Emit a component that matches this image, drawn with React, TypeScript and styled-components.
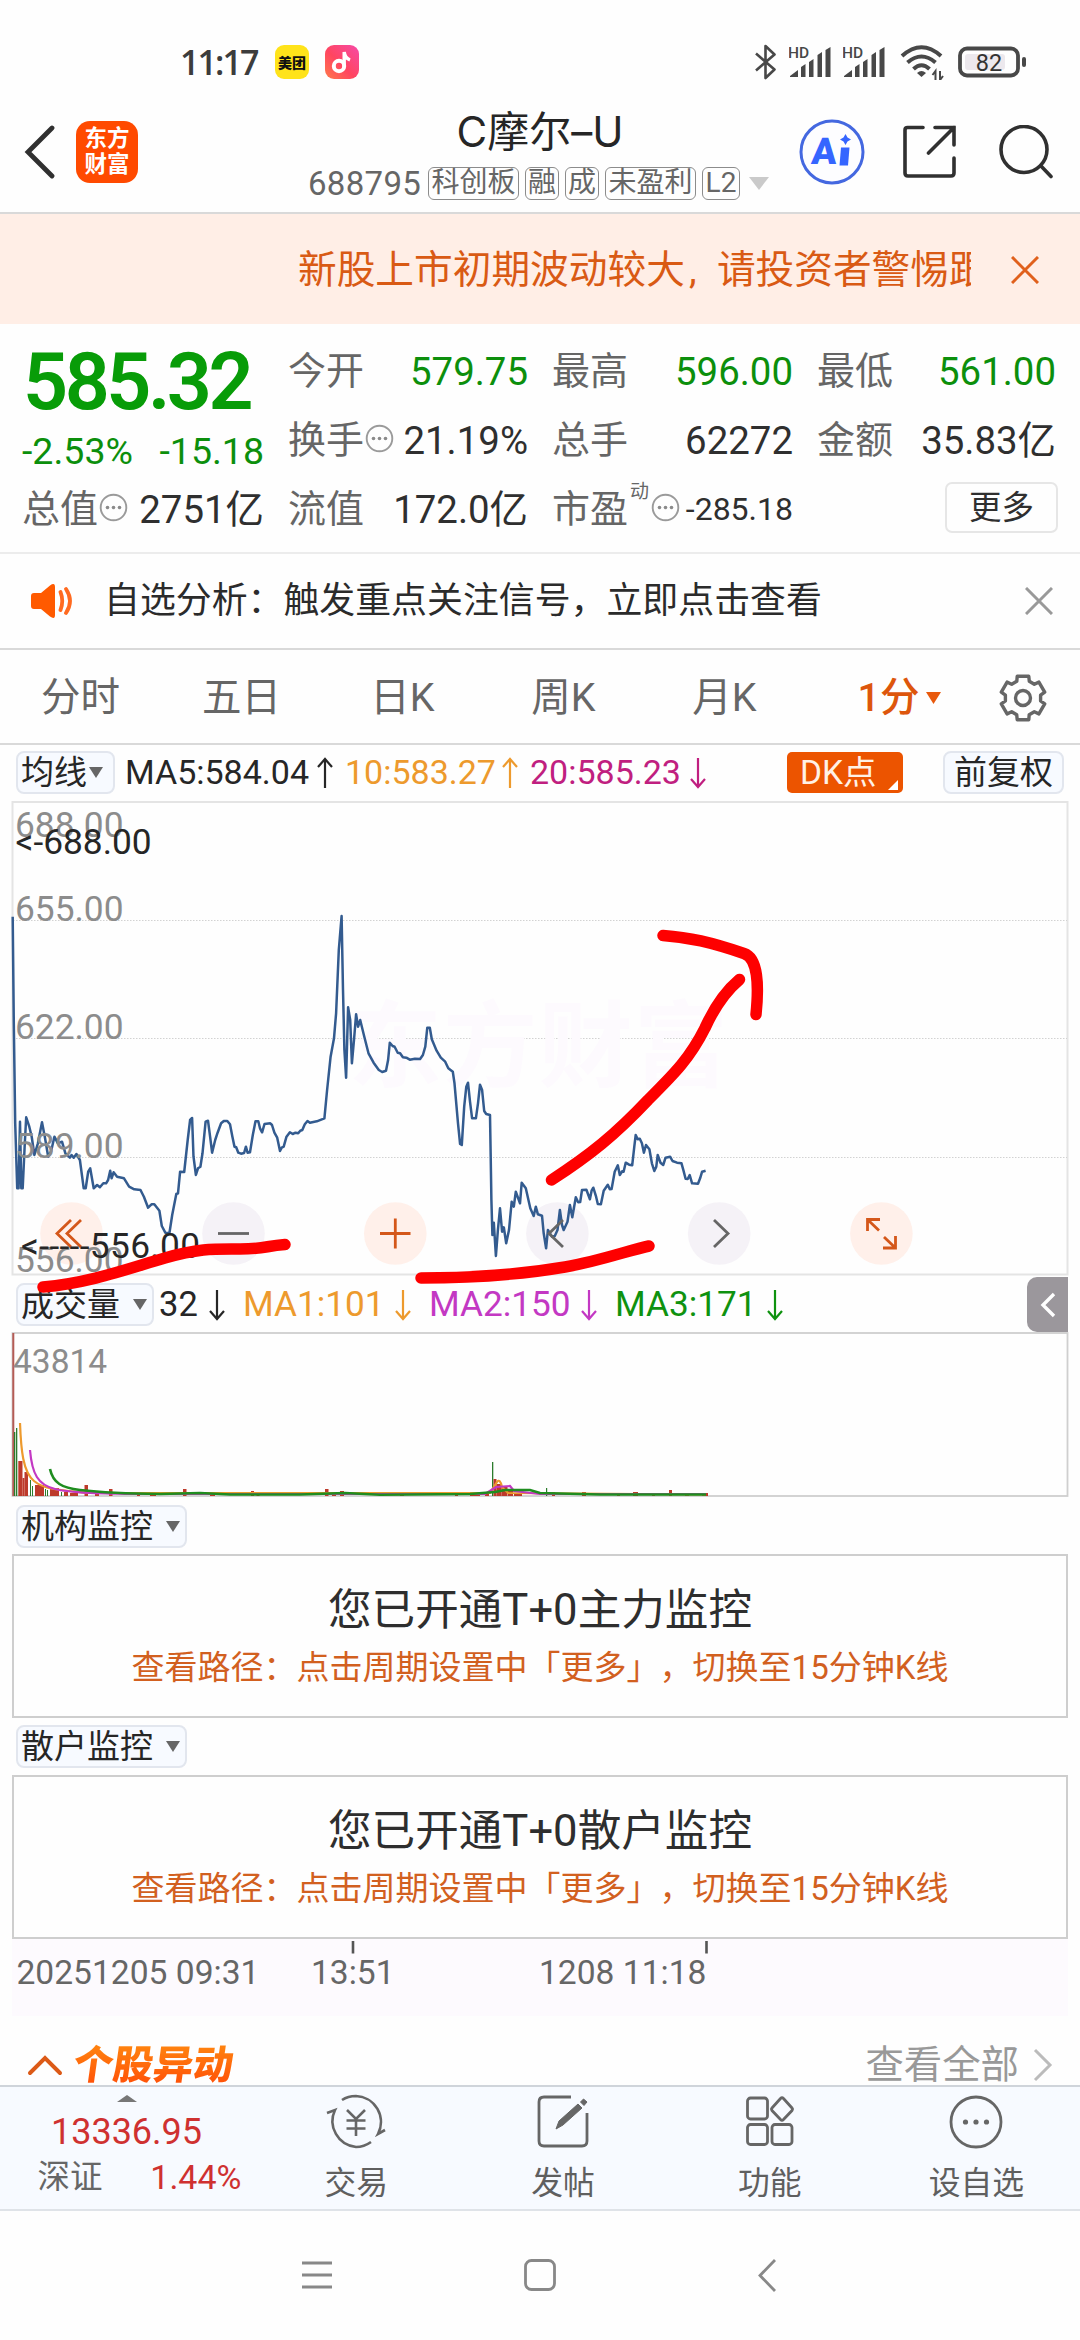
import React from "react";
import styled, { createGlobalStyle } from "styled-components";

const GlobalStyle = createGlobalStyle`
  * { box-sizing: border-box; }
  html, body { margin: 0; padding: 0; background: #fefefe; }
  body {
    font-family: Roboto, "Noto Sans CJK SC", sans-serif;
    color: #2b2b2b;
    text-spacing-trim: space-all;
    -webkit-font-smoothing: antialiased;
  }
  svg { display: block; flex: none; }
`;

const Screen = styled.main`
  width: 1080px;
  height: 2340px;
  overflow: hidden;
  display: flex;
  flex-direction: column;
  background: #fefefe;
  white-space: nowrap;
`;

/* ---------- status bar ---------- */
const StatusBar = styled.div`
  height: 84px;
  flex: none;
  padding: 40px 53px 0 180px;
  display: flex;
  justify-content: space-between;
`;
const StatusGroup = styled.div`
  height: 44px;
  display: flex;
  align-items: center;
`;
const Clock = styled.span`
  width: 95px;
  font: 600 34px/44px "Open Sans", Roboto, sans-serif;
  letter-spacing: -1.9px;
  color: #3c3c3c;
`;
const AppBadge = styled.span<{ $bg: string }>`
  width: 34px;
  height: 34px;
  margin-right: 16px;
  border-radius: 9px;
  background: ${(p) => p.$bg};
  color: #111;
  font-size: 14px;
  font-weight: 900;
  display: flex;
  align-items: center;
  justify-content: center;
`;

/* ---------- header ---------- */
const Header = styled.header`
  height: 130px;
  flex: none;
  display: grid;
  grid-template-columns: 300px 480px 300px;
  border-bottom: 2px solid #d9d9d9;
`;
const HeaderLeft = styled.div`
  display: flex;
  align-items: center;
  padding: 7px 0 0 22px;
  gap: 20px;
`;
const Logo = styled.div`
  width: 62px;
  height: 62px;
  border-radius: 14px;
  background: #ff4a00;
  color: #fff;
  font-size: 22.5px;
  font-weight: 700;
  line-height: 26px;
  text-align: center;
  padding-top: 4px;
`;
const HeaderTitle = styled.div`
  padding-top: 24px;
`;
const Title = styled.h1`
  margin: 0;
  font: 400 42px/48px Inter, "Noto Sans CJK SC", sans-serif;
  text-align: center;
  color: #262626;
`;
const CodeRow = styled.div`
  display: flex;
  align-items: center;
  height: 33px;
  margin-top: 11px;
  padding-left: 8px;
  font-size: 33px;
  color: #666;
`;
const Code = styled.span`
  width: 120px;
  letter-spacing: 0.3px;
`;
const Tag = styled.span<{ $w: number }>`
  width: ${(p) => p.$w}px;
  height: 33px;
  margin-right: 6px;
  border: 1.5px solid #8c8c8c;
  border-radius: 6px;
  font-size: 28px;
  line-height: 30px;
  display: flex;
  justify-content: center;
`;
const HeaderRight = styled.div`
  display: flex;
  align-items: center;
  padding: 7px 0 0 19px;
  gap: 37px;
`;

/* ---------- risk notice ---------- */
const Notice = styled.div`
  height: 110px;
  flex: none;
  background: #ffeee6;
  display: flex;
  align-items: center;
  padding: 1px 0 0 298px;
`;
const Marquee = styled.div`
  width: 673px;
  padding-top: 1px;
  overflow: hidden;
  font-size: 38.7px;
  line-height: 56px;
  color: #d95a14;
`;
const Comma = styled.span`
  display: inline-block;
  width: 32px;
  padding-left: 4px;
`;
const CloseIcon = styled.svg`
  margin-left: 40px;
`;

/* ---------- quote ---------- */
const Quote = styled.section`
  height: 230px;
  flex: none;
  display: grid;
  grid-template-columns: 242px 240px 241px 239px;
  column-gap: 24px;
  padding: 12px 0 0 22px;
  border-bottom: 2px solid #ececec;
`;
const Column = styled.div`
  display: flex;
  flex-direction: column;
`;
const Price = styled.div`
  height: 92px;
  padding-left: 1px;
  font-size: 79px;
  font-weight: 600;
  line-height: 93px;
  letter-spacing: -3.5px;
  color: #089c08;
`;
const Change = styled.div`
  height: 46px;
  display: flex;
  justify-content: space-between;
  font-size: 37.5px;
  line-height: 46px;
  color: #0c8f0c;
`;
const Metric = styled.div<{ $first?: boolean }>`
  height: 69px;
  line-height: 69px;
  display: flex;
  align-items: center;
  font-size: 38px;
  margin-top: ${(p) => (p.$first ? "1px" : "0")};
`;
const MetricLabel = styled.span`
  color: #666;
  font-size: 38px;
`;
const MetricValue = styled.span<{ $green?: boolean; $size?: number }>`
  margin-left: auto;
  color: ${(p) => (p.$green ? "#0c8f0c" : "#2f2f2f")};
  font-size: ${(p) => p.$size ?? 38.4}px;
`;
const Super = styled.span`
  color: #666;
  font-size: 19px;
  line-height: 24px;
  margin: 0 1px 36px 2px;
`;
const MoreButton = styled.button`
  width: 113px;
  height: 51px;
  margin: 7px -2px 0 auto;
  padding: 0;
  border: 2px solid #e6e6e6;
  border-radius: 7px;
  background: transparent;
  font: 400 32.5px/44px Roboto, "Noto Sans CJK SC", sans-serif;
  color: #2f2f2f;
`;

/* ---------- alert ---------- */
const Alert = styled.div`
  height: 96px;
  flex: none;
  display: flex;
  align-items: center;
  padding: 0 27px 0 30px;
  border-bottom: 2px solid #d9d9d9;
`;
const AlertText = styled.span`
  margin-left: 30px;
  flex: 1;
  font-size: 35.9px;
  line-height: 48px;
  color: #2b2b2b;
`;

/* ---------- tabs ---------- */
const Tabs = styled.nav`
  height: 95px;
  flex: none;
  display: grid;
  grid-template-columns: repeat(5, 161px) 189px 1fr;
  align-items: center;
  padding-top: 2px;
  border-bottom: 2px solid #d9d9d9;
`;
const Tab = styled.span<{ $active?: boolean }>`
  font-size: 39.5px;
  line-height: 60px;
  color: ${(p) => (p.$active ? "#dd560c" : "#666")};
  font-weight: ${(p) => (p.$active ? 500 : 400)};
  display: flex;
  align-items: center;
  justify-content: center;
  gap: 7px;
`;

/* ---------- indicator rows ---------- */
const IndicatorRow = styled.div<{ $h: number; $pt: number }>`
  height: ${(p) => p.$h}px;
  flex: none;
  display: flex;
  align-items: flex-start;
  padding: ${(p) => p.$pt}px 12px 0 16px;
`;
const Chip = styled.span<{ $w: number; $gap?: number }>`
  width: ${(p) => p.$w}px;
  height: 43px;
  flex: none;
  display: flex;
  align-items: center;
  gap: ${(p) => p.$gap ?? 13}px;
  padding-left: 3px;
  border: 2px solid #e2e6ee;
  border-radius: 8px;
  background: #f7faff;
  font-size: 33px;
  line-height: 40px;
  color: #262626;
`;
const Reading = styled.span<{ $c: string; $w: number; $size: number }>`
  width: ${(p) => p.$w}px;
  height: 43px;
  flex: none;
  font-size: ${(p) => p.$size}px;
  line-height: 45px;
  color: ${(p) => p.$c};
  display: flex;
  align-items: center;
  justify-content: space-between;
`;
const Lead = styled.span<{ $w: number }>`
  width: ${(p) => p.$w}px;
  flex: none;
`;
const DkButton = styled.span`
  width: 116px;
  height: 41px;
  margin-top: 1px;
  padding: 0 5px 3px 13px;
  display: flex;
  align-items: flex-end;
  justify-content: space-between;
  border-radius: 5px;
  background: #ec5400;
  color: #fff1e6;
  font-size: 33.5px;
  line-height: 34px;
`;
const Drawer = styled.span`
  width: 41px;
  height: 55px;
  margin-left: auto;
  display: flex;
  align-items: center;
  justify-content: center;
  border-radius: 10px 0 0 10px;
  background: #9b979c;
`;

/* ---------- charts ---------- */
const ChartSvg = styled.svg`
  margin-left: 12px;
  overflow: visible;
  position: relative;
  z-index: 1;
`;
const Panel = styled.section`
  width: 1056px;
  height: 164px;
  flex: none;
  margin-left: 12px;
  padding-top: 25px;
  border: 2px solid #cecece;
  text-align: center;
`;
const PanelTitle = styled.div`
  font-size: 43.6px;
  line-height: 60px;
  color: #2e2e2e;
`;
const PanelHint = styled.div`
  font-size: 33px;
  line-height: 53px;
  color: #d2601f;
`;
const Axis = styled.svg`
  margin-left: 12px;
  background: #fdfafe;
`;

/* ---------- movement row ---------- */
const Movement = styled.div`
  height: 69px;
  flex: none;
  display: flex;
  align-items: center;
  padding: 28px 27px 0 27px;
  overflow: hidden;
`;
const MovementTitle = styled.span`
  margin: -5px 0 0 11px;
  flex: none;
  width: 164px;
  font: 900 40px/44px "Noto Sans CJK SC", sans-serif;
  transform: skewX(-8deg);
  color: transparent;
  background: linear-gradient(#ff8a10, #ff5208);
  -webkit-background-clip: text;
  background-clip: text;
`;
const SeeAll = styled.span`
  margin-left: auto;
  margin-right: 14px;
  font-size: 38.4px;
  line-height: 44px;
  color: #999;
`;

/* ---------- bottom bar ---------- */
const BottomBar = styled.footer`
  height: 126px;
  flex: none;
  display: grid;
  grid-template-columns: 253px repeat(4, 206.7px);
  border-top: 2px solid #cfd4da;
  border-bottom: 2px solid #dfe3e8;
  background: #f7faff;
`;
const IndexCell = styled.div`
  display: flex;
  flex-direction: column;
  align-items: center;
  padding-top: 8px;
  color: #cf3130;
`;
const IndexValue = styled.div`
  margin-top: 10px;
  font-size: 36px;
  line-height: 40px;
`;
const IndexChange = styled.div`
  width: 204px;
  margin: 5px 0 0 26px;
  display: flex;
  justify-content: space-between;
  font-size: 34px;
  line-height: 40px;
`;
const IndexName = styled.span`
  font-size: 32.5px;
  color: #666;
`;
const Action = styled.div`
  display: flex;
  flex-direction: column;
  align-items: center;
  padding-top: 5px;
  font-size: 31.8px;
  line-height: 40px;
  color: #5f5f5f;
  gap: 13px;
`;
const SystemNav = styled.div`
  flex: 1;
  display: flex;
  padding: 45px 0 0 299px;
`;

/* ---------- small drawings ---------- */
const Caret = ({ w = 14, h = 11, c = "#666" }: { w?: number; h?: number; c?: string }) => (
  <svg width={w} height={h}>
    <path d={`M0 0H${w}L${w / 2} ${h}Z`} fill={c} />
  </svg>
);

const Arrow = ({ up, c }: { up?: boolean; c: string }) => (
  <svg width="18" height="32" viewBox="0 0 18 32" fill="none" stroke={c} strokeWidth="2.2">
    {up ? <path d="M9 31V2M2 10L9 2L16 10" /> : <path d="M9 1V30M2 22L9 30L16 22" />}
  </svg>
);

const Cross = ({ c, s = 28, sw = 3 }: { c: string; s?: number; sw?: number }) => (
  <CloseIcon width={s} height={s} viewBox="0 0 28 28" stroke={c} strokeWidth={sw}>
    <path d="M1 1L27 27M27 1L1 27" />
  </CloseIcon>
);

const DotsSvg = styled.svg`
  margin: -5px 0 0 1px;
`;
const InfoDots = () => (
  <DotsSvg width="29" height="29" viewBox="0 0 29 29">
    <circle cx="14.5" cy="14.5" r="12.8" fill="none" stroke="#9a9a9a" strokeWidth="1.9" />
    {[8.5, 14.5, 20.5].map((x) => (
      <circle key={x} cx={x} cy="14.5" r="1.8" fill="#8a8a8a" />
    ))}
  </DotsSvg>
);

const Signal = () => (
  <svg width="42" height="34" viewBox="0 0 42 34" fill="#484848">
    <text x="-1" y="13" fontSize="15.5" fontWeight="500" fontFamily="Roboto">HD</text>
    <path d="M1 32V31L9 25V32ZM12 32V22L16.5 19V32ZM20 32V17L24.5 14V32ZM28.5 32V10L33 7V32ZM36.5 32V5L41.500 2V32Z" />
  </svg>
);

const StatusIcons = () => (
  <StatusGroup>
    <svg width="21" height="36" viewBox="0 0 21 36" fill="none" stroke="#484848" strokeWidth="2.6">
      <path d="M1 9.500L19.500 25.500L10.500 34V2L19.500 10.500L1 26.500" strokeLinejoin="round" />
    </svg>
    <Lead $w={13} />
    <Signal />
    <Lead $w={12} />
    <Signal />
    <Lead $w={15} />
    <svg width="44" height="36" viewBox="0 0 44 36" fill="none" stroke="#484848" strokeWidth="4">
      <path d="M2 12Q21.500 -5.500 41 12M7.500 18.500Q21.500 6.500 35.500 18.500M13.500 25Q21.500 17.500 29.500 25" />
      <path d="M17 29Q21.500 25 26 29L21.500 33Z" fill="#484848" stroke="none" />
      <path d="M35.500 36V27L32.500 31M40 27V36L43 32" strokeWidth="2" />
    </svg>
    <Lead $w={14} />
    <svg width="69" height="32" viewBox="0 0 69 32">
      <rect x="2" y="2.500" width="58" height="27" rx="7" fill="#fefefe" stroke="#484848" strokeWidth="3.800" />
      <rect x="7" y="8" width="40" height="16" rx="3" fill="#ece8ed" />
      <rect x="64" y="11" width="4" height="10" rx="2" fill="#484848" />
      <text x="31" y="24.500" textAnchor="middle" fontSize="23.500" fontWeight="400" fontFamily="Roboto" fill="#333">82</text>
    </svg>
  </StatusGroup>
);

/* ---------- price chart ---------- */
// Averaged price trace, sampled on a fine grid: [column, row].
const trace: number[] = [
  37,380, 40,700, 44,1000, 50,1195, 54,1195, 58,995, 62,1195, 66,1195, 72,1060, 76,982, 85,1010, 92,1040, 100,1095,
  110,1060, 122,997, 130,1040, 140,1100, 148,1085, 158,1040, 168,1060, 180,1055, 190,1090, 203,1103, 208,1095,
  214,1103, 222,1092, 232,1110, 243,1195, 249,1195, 256,1145, 262,1135, 272,1195, 282,1185, 290,1192, 300,1180,
  308,1180, 314,1170, 320,1142, 324,1165, 330,1147, 340,1160, 360,1165, 375,1190, 390,1198, 408,1200, 418,1220,
  430,1253, 440,1243, 448,1243, 463,1262, 470,1308, 480,1328, 492,1330, 500,1275, 512,1212, 517,1210, 523,1145,
  535,1146, 545,1050, 552,990, 558,984, 562,1100, 569,1155, 575,1135, 582,1130, 588,1090, 597,995, 604,992,
  610,1040, 616,1088, 625,1050, 632,1028, 642,1000, 650,993, 660,993, 668,1003, 675,1040, 681,1070, 686,1072,
  692,1088, 700,1091, 709,1089, 714,1070, 719,1088, 726,1087, 734,1035, 742,994, 750,994, 755,1015, 761,1027,
  768,1002, 785,1000, 790,1005, 797,1028, 805,1043, 813,1083, 818,1073, 824,1070, 832,1040, 842,1027, 850,1032,
  858,1028, 866,1030, 872,1022, 878,1020, 885,1003, 893,993, 900,998, 920,994, 942,985, 950,900, 960,800,
  970,745, 976,670, 984,480, 992,378, 996,600, 1000,780, 1005,863, 1008,760, 1011,652, 1017,690, 1022,820,
  1028,750, 1034,673, 1040,710, 1046,690, 1058,740, 1070,790, 1085,818, 1100,840, 1110,846, 1121,842, 1127,810,
  1132,758, 1140,768, 1146,770, 1155,788, 1162,790, 1170,802, 1180,803, 1190,809, 1205,806, 1220,807, 1228,795,
  1235,770, 1241,713, 1248,713, 1254,748, 1268,782, 1280,803, 1293,815, 1302,835, 1315,845, 1320,880, 1330,1000,
  1336,1062, 1341,1065, 1348,950, 1354,890, 1359,878, 1365,935, 1371,985, 1382,985, 1388,940, 1394,884, 1400,900,
  1406,963, 1412,972, 1423,975, 1425,1100, 1427,1230, 1430,1335, 1434,1298, 1440,1398, 1446,1320, 1452,1255,
  1458,1325, 1463,1312, 1470,1360, 1478,1320, 1486,1235, 1492,1250, 1498,1205, 1510,1240, 1515,1178, 1527,1195,
  1540,1255, 1550,1278, 1556,1250, 1562,1273, 1574,1277, 1579,1330, 1586,1375, 1591,1320, 1597,1330, 1603,1340,
  1611,1338, 1619,1320, 1626,1260, 1632,1305, 1637,1320, 1648,1295, 1655,1245, 1662,1282, 1672,1222, 1679,1237,
  1685,1236, 1690,1200, 1703,1199, 1713,1228, 1718,1202, 1723,1193, 1731,1220, 1736,1242, 1745,1243, 1753,1202,
  1765,1184, 1771,1198, 1776,1197, 1785,1145, 1794,1126, 1800,1155, 1807,1144, 1811,1145, 1817,1118, 1827,1124,
  1836,1126, 1842,1070, 1846,1035, 1852,1048, 1858,1046, 1864,1060, 1870,1088, 1876,1065, 1886,1078, 1893,1120,
  1900,1143, 1906,1130, 1910,1095, 1918,1118, 1926,1125, 1933,1103, 1946,1100, 1953,1113, 1966,1118, 1979,1120,
  1985,1142, 1991,1166, 1997,1167, 2003,1155, 2010,1180, 2027,1181, 2033,1165, 2039,1145, 2049,1142,
];
const tracePoints = trace
  .map((v, i) => (i % 2 === 0 ? (v / 2.904).toFixed(1) : (790 + v / 3).toFixed(1)))
  .reduce((acc, v, i) => acc + (i % 2 ? "," : " ") + v, "");

const levels: [string, number][] = [
  ["688.00", 837], ["655.00", 921], ["622.00", 1038.5], ["589.00", 1157.5], ["556.00", 1272],
];
const knobs: [number, string][] = [
  [71.5, "#fff0ea"], [233.5, "#f5f2f7"], [395.3, "#fff0ea"], [557.4, "#f5f2f7"], [719.2, "#f5f2f7"], [881.4, "#fff0ea"],
];

const PriceChart = () => (
  <ChartSvg width="1056" height="474" viewBox="12 801 1056 474" fontFamily="Roboto">
    <rect x="12.500" y="802" width="1055" height="472.500" fill="none" stroke="#e4e4e4" strokeWidth="2" />
    {[920.5, 1038.5, 1157.5].map((y) => (
      <path key={y} d={`M13 ${y}H1067`} stroke="#d2d2d2" strokeWidth="1" strokeDasharray="1.500 1.500" />
    ))}
    <text x="348" y="1080" fontSize="94" fontWeight="700" fontFamily="Noto Sans CJK SC" fill="#fdfafe" textLength="380">东方财富</text>
    {knobs.map(([x, c]) => (
      <circle key={x} cx={x} cy="1233.500" r="31.300" fill={c} />
    ))}
    <polyline points={tracePoints} fill="none" stroke="#335b8f" strokeWidth="2.500" strokeLinejoin="round" />
    <g fontSize="35.300" fill="#8c8c8c">
      {levels.map(([t, y]) => (
        <text key={t} x="15" y={y}>{t}</text>
      ))}
    </g>
    <g fill="none" stroke="#d4571a" strokeWidth="2.800">
      <path d="M71 1220L57 1233.500L71 1247M81 1220L67 1233.500L81 1247" />
      <path d="M380 1233.500H410.500M395.300 1218.500V1248.500" />
      <path d="M879 1230.500L867.500 1219.500M867.500 1231V1219.500H880M884 1237L895.500 1248M895.500 1236V1248H883" />
    </g>
    <g fill="none" stroke="#666" strokeWidth="2.800">
      <path d="M218 1233.500H249" />
      <path d="M563 1220L549 1233.500L563 1247" />
      <path d="M714 1220L728 1233.500L714 1247" />
    </g>
    <g fontSize="35.300" fill="#262626">
      <text x="15.500" y="854">&lt;-688.00</text>
      <text x="21" y="1257.500" textLength="179">&lt;-----556.00</text>
    </g>
    <g fill="none" stroke="#fe0000" strokeWidth="11.500" strokeLinecap="round" strokeLinejoin="round">
      <path d="M43 1287C90 1283 130 1268 165 1258S215 1249 240 1249S265 1246 285 1244.500" />
      <path d="M421 1278C480 1278 530 1273 565 1267S630 1250 649 1246" />
      <path d="M551.500 1180C590 1155 615 1135 648 1100C675 1073 690 1058 705 1028C715 1006 727 990 739.500 979.500" />
      <path d="M663 935.500C690 937.500 710 942 744 953.500C758 958 759 985 756 1014.500" />
    </g>
  </ChartSvg>
);

/* ---------- volume chart ---------- */
// [x, width, height, colour]
const red = "#bd3a2b";
const green = "#2c7c2c";
const bars: [number, number, number, string][] = [
  [14, 1.3, 64, green], [16, 1.3, 68, green], [18.3, 4.2, 35, red], [22.5, 2, 18, red], [24.5, 3.5, 24, red],
  [30, 1, 16, green], [32, 1, 10, green], [35, 9, 11, red], [45, 1, 7, green], [47, 1, 6, green], [50, 9, 8, red],
  [61, 1, 4, green], [64, 4, 4, red], [70, 8, 3, red], [84.500, 3.500, 11, red], [95, 4, 3, red], [109, 3.500, 7, red],
  [137, 3, 4, red], [150, 6, 3, red], [183, 3.500, 7, red], [210, 5, 3, red], [251, 3, 5, red], [256.500, 3, 4, red],
  [325, 3.500, 7, red], [332, 4, 4, red], [340, 4, 5, red], [400, 4, 2, red], [455, 3, 3, red], [470, 10, 4, red],
  [485, 4, 4, red], [492, 1.300, 34, green], [493.500, 3, 17, red], [496.500, 5, 12, red], [501.500, 6, 9, red],
  [508, 5, 6, red], [514, 8, 3, red], [546, 1.200, 8, green], [552, 3, 4, red], [582, 4, 4, red], [617, 3, 3, red],
  [633, 5, 4, red], [652, 3, 3, red], [669, 3, 6, red], [685, 4, 3, red], [702, 6, 3, red],
];
const VolumeChart = () => (
  <ChartSvg width="1056" height="165" viewBox="12 1332 1056 165" fontFamily="Roboto">
    <rect x="12.500" y="1333" width="1055" height="163" fill="none" stroke="#cfcfcf" strokeWidth="1.800" />
    <path d="M13.300 1333V1496" stroke="#b45b55" strokeWidth="2" />
    {bars.map(([x, w, h, c]) => (
      <rect key={x} x={x} y={1496 - h} width={w} height={h} fill={c} />
    ))}
    <g fill="none" strokeWidth="2.200">
      <path d="M20 1423C21 1450 23 1472 34 1481S60 1490 90 1493H490L497 1482Q500 1478 502 1487L508 1493L706 1494.500" stroke="#ed9a2d" />
      <path d="M30 1450C32 1474 38 1485 55 1489S90 1493 130 1494H485L496 1487L510 1486L514 1491L540 1494H706" stroke="#c338c3" />
      <path d="M50 1469C53 1483 62 1488 80 1490S120 1493.500 160 1494L200 1493L230 1494.500H300L345 1493L380 1494.800L470 1494L495 1492L505 1490L530 1490L540 1493L600 1494.500H706" stroke="#1f8d1f" strokeWidth="2.600" />
    </g>
    <text x="13" y="1373" fontSize="33.500" fill="#8c8c8c">43814</text>
  </ChartSvg>
);

const PanelBlock = ({ name }: { name: string }) => (
  <Panel>
    <PanelTitle>您已开通T+0{name}监控</PanelTitle>
    <PanelHint>查看路径：点击周期设置中「更多」，切换至15分钟K线</PanelHint>
  </Panel>
);

const gearPath = (() => {
  const pts: string[] = [];
  for (let i = 0; i < 6; i++) {
    const a = (i * Math.PI) / 3 - Math.PI / 2;
    [[-0.26, 22.5], [0.26, 22.5], [0.36, 17.8], [0.69, 17.8]].forEach(([d, r]) => {
      pts.push(`${(25 + r * Math.cos(a + d)).toFixed(1)} ${(25 + r * Math.sin(a + d)).toFixed(1)}`);
    });
  }
  return "M" + pts.join("L") + "Z";
})();
const Gear = styled.svg`
  margin-left: 4px;
`;
const PlainChip = styled(Chip)`
  padding-left: 9px;
`;
const RaisedDrawer = styled(Drawer)`
  margin-top: -6px;
`;
const TotalMetric = styled(Metric)`
  margin-top: 1px;
`;

export default function App() {
  return (
    <>
      <GlobalStyle />
      <Screen>
        <StatusBar>
          <StatusGroup>
            <Clock>11:17</Clock>
            <AppBadge $bg="#ffe31a">美团</AppBadge>
            <AppBadge $bg="linear-gradient(45deg,#ff7a4a,#ff4560 45%,#f64aa8)">
              <svg width="22" height="24" viewBox="0 0 22 24" fill="none" stroke="#fff" strokeWidth="4">
                <circle cx="8" cy="16" r="5.200" />
                <path d="M13.200 17V2Q14 8 19 10" strokeWidth="3.400" />
              </svg>
            </AppBadge>
          </StatusGroup>
          <StatusIcons />
        </StatusBar>

        <Header>
          <HeaderLeft>
            <svg width="34" height="54" viewBox="0 0 34 54" fill="none" stroke="#303030" strokeWidth="4.800">
              <path d="M30 3L6 27L30 51" strokeLinecap="round" />
            </svg>
            <Logo>东方<br />财富</Logo>
          </HeaderLeft>
          <HeaderTitle>
            <Title>C摩尔–U</Title>
            <CodeRow>
              <Code>688795</Code>
              <Tag $w={91}>科创板</Tag>
              <Tag $w={34}>融</Tag>
              <Tag $w={34}>成</Tag>
              <Tag $w={91}>未盈利</Tag>
              <Tag $w={38}>L2</Tag>
              <Lead $w={3} />
              <Caret w={20} h={13} c="#cacaca" />
            </CodeRow>
          </HeaderTitle>
          <HeaderRight>
            <svg width="66" height="66" viewBox="0 0 66 66">
              <circle cx="33" cy="33" r="31" fill="#fdfdff" stroke="#4468e0" strokeWidth="3" />
              <text x="12" y="45.500" fontSize="37" fontWeight="900" fontFamily="Roboto" fill="#3565ff" transform="skewX(-4) translate(3 0)">A</text>
              <path d="M42 28.500H50.500L49 46.500H40.500Z" fill="#3565ff" />
              <path d="M46.500 15L48.500 18.500L52 20.500L48.500 22.500L46.500 26L44.500 22.500L41 20.500L44.500 18.500Z" fill="#3565ff" />
            </svg>
            <svg width="58" height="54" viewBox="0 0 58 54" fill="none" stroke="#303030" strokeWidth="3.600" strokeLinecap="round">
              <path d="M21 2.500H5.500Q3 2.500 3 5V48Q3 51 6 51H49Q52 51 52 48V33" />
              <path d="M33 2.500H52V20M52 2.500L26.500 28" />
            </svg>
            <svg width="56" height="54" viewBox="0 0 56 54" fill="none" stroke="#303030" strokeWidth="3.600" strokeLinecap="round">
              <circle cx="27" cy="24.500" r="23" />
              <path d="M44 41L54 51.500" />
            </svg>
          </HeaderRight>
        </Header>

        <Notice>
          <Marquee>新股上市初期波动较大<Comma>,</Comma>请投资者警惕跟</Marquee>
          <Cross c="#e0601c" />
        </Notice>

        <Quote>
          <Column>
            <Price>585.32</Price>
            <Change><span>-2.53%</span><span>-15.18</span></Change>
            <TotalMetric>
              <MetricLabel>总值</MetricLabel><InfoDots />
              <MetricValue>2751亿</MetricValue>
            </TotalMetric>
          </Column>
          <Column>
            <Metric $first><MetricLabel>今开</MetricLabel><MetricValue $green>579.75</MetricValue></Metric>
            <Metric><MetricLabel>换手</MetricLabel><InfoDots /><MetricValue>21.19%</MetricValue></Metric>
            <Metric><MetricLabel>流值</MetricLabel><MetricValue>172.0亿</MetricValue></Metric>
          </Column>
          <Column>
            <Metric $first><MetricLabel>最高</MetricLabel><MetricValue $green>596.00</MetricValue></Metric>
            <Metric><MetricLabel>总手</MetricLabel><MetricValue>62272</MetricValue></Metric>
            <Metric>
              <MetricLabel>市盈</MetricLabel><Super>动</Super><InfoDots />
              <MetricValue $size={32}>-285.18</MetricValue>
            </Metric>
          </Column>
          <Column>
            <Metric $first><MetricLabel>最低</MetricLabel><MetricValue $green>561.00</MetricValue></Metric>
            <Metric><MetricLabel>金额</MetricLabel><MetricValue>35.83亿</MetricValue></Metric>
            <MoreButton>更多</MoreButton>
          </Column>
        </Quote>

        <Alert>
          <svg width="44" height="36" viewBox="0 0 44 36">
            <path d="M4 10H11L20 2.500Q25 -1 25 4V32Q25 37 20 33.500L11 26H4Q1 26 1 23V13Q1 10 4 10Z" fill="#ff5a00" />
            <path d="M30.500 9Q34 18 30.500 27M36 6Q44 18 36 30" fill="none" stroke="#ff6a20" strokeWidth="3.800" strokeLinecap="round" />
          </svg>
          <AlertText>自选分析：触发重点关注信号，立即点击查看</AlertText>
          <Cross c="#999" />
        </Alert>

        <Tabs>
          <Tab>分时</Tab>
          <Tab>五日</Tab>
          <Tab>日K</Tab>
          <Tab>周K</Tab>
          <Tab>月K</Tab>
          <Tab $active>1分<Caret w={15} h={12} c="#e8590c" /></Tab>
          <Gear width="50" height="50" viewBox="0 0 50 50" fill="none" stroke="#666" strokeWidth="3.400">
            <path d={gearPath} strokeLinejoin="round" />
            <circle cx="25" cy="25" r="7.500" />
          </Gear>
        </Tabs>

        <IndicatorRow $h={56} $pt={6}>
          <Chip $w={99} $gap={2}>均线<Caret /></Chip>
          <Lead $w={10} />
          <Reading $c="#262626" $w={209} $size={34}>MA5:584.04<Arrow up c="#262626" /></Reading>
          <Lead $w={11} />
          <Reading $c="#ed9a2d" $w={174} $size={34}>10:583.27<Arrow up c="#ed9a2d" /></Reading>
          <Lead $w={11} />
          <Reading $c="#c01f80" $w={177} $size={34}>20:585.23<Arrow c="#c01f80" /></Reading>
          <Lead $w={80} />
          <DkButton>DK点<svg width="10" height="10"><path d="M10 0V10H0Z" fill="#fff" /></svg></DkButton>
          <Lead $w={40} />
          <PlainChip $w={121}>前复权</PlainChip>
        </IndicatorRow>

        <PriceChart />

        <IndicatorRow $h={57} $pt={8}>
          <Chip $w={138}>成交量<Caret /></Chip>
          <Lead $w={5} />
          <Reading $c="#262626" $w={67} $size={34.5}>32<Arrow c="#262626" /></Reading>
          <Lead $w={17} />
          <Reading $c="#ed9a2d" $w={169} $size={35.2}>MA1:101<Arrow c="#ed9a2d" /></Reading>
          <Lead $w={17} />
          <Reading $c="#c338c3" $w={169} $size={35.2}>MA2:150<Arrow c="#c338c3" /></Reading>
          <Lead $w={17} />
          <Reading $c="#0f920f" $w={169} $size={35.2}>MA3:171<Arrow c="#0f920f" /></Reading>
          <RaisedDrawer>
            <svg width="16" height="26" viewBox="0 0 16 26" fill="none" stroke="#fff" strokeWidth="3.400">
              <path d="M14 2L3 13L14 24" />
            </svg>
          </RaisedDrawer>
        </IndicatorRow>

        <VolumeChart />

        <IndicatorRow $h={57} $pt={8}><Chip $w={171}>机构监控<Caret /></Chip></IndicatorRow>
        <PanelBlock name="主力" />
        <IndicatorRow $h={57} $pt={7}><Chip $w={171}>散户监控<Caret /></Chip></IndicatorRow>
        <PanelBlock name="散户" />

        <Axis width="1056" height="77" viewBox="12 1939 1056 77" fontFamily="Roboto" fontSize="33.600" fill="#666">
          <path d="M353 1941V1953.500M706.500 1941V1953.500" stroke="#555" strokeWidth="2.600" />
          <text x="16.500" y="1984">20251205 09:31</text>
          <text x="311" y="1984">13:51</text>
          <text x="539" y="1984">1208 11:18</text>
        </Axis>

        <Movement>
          <svg width="36" height="22" viewBox="0 0 36 22" fill="none" stroke="#dc5a17" strokeWidth="4" strokeLinecap="round">
            <path d="M3 19L18 4L33 19" />
          </svg>
          <MovementTitle>个股异动</MovementTitle>
          <SeeAll>查看全部</SeeAll>
          <svg width="20" height="34" viewBox="0 0 20 34" fill="none" stroke="#bbb" strokeWidth="3">
            <path d="M2 2L17 17L2 32" />
          </svg>
        </Movement>

        <BottomBar>
          <IndexCell>
            <svg width="20" height="7"><path d="M0 7L10 0L20 7Z" fill="#777" /></svg>
            <IndexValue>13336.95</IndexValue>
            <IndexChange><IndexName>深证</IndexName><span>1.44%</span></IndexChange>
          </IndexCell>
          <Action>
            <svg width="62" height="58" viewBox="0 0 62 58" fill="none" stroke="#666" strokeWidth="2.600">
              <path d="M17 8Q23 4 31 4A26 26 0 0 1 53 42L60 38" />
              <path d="M46 50Q39 55 31 55A26 26 0 0 1 10 18L2 21" />
              <path d="M22 18L31 27L40 18M31 27V44M21.500 28.500H40.500M21.500 36.500H40.500" />
            </svg>
            交易
          </Action>
          <Action>
            <svg width="62" height="58" viewBox="0 0 62 58" fill="none" stroke="#666" strokeWidth="2.800">
              <path d="M39 5H12Q7 5 7 10V49Q7 54 12 54H50Q55 54 55 49V21" />
              <path d="M24 37L27 29L46 12L50 16L31 33ZM48.500 10L51.500 7L55 10L52 13.500Z" fill="#666" stroke="#666" strokeWidth="1" />
            </svg>
            发帖
          </Action>
          <Action>
            <svg width="62" height="58" viewBox="0 0 62 58" fill="none" stroke="#666" strokeWidth="2.800">
              <rect x="8.500" y="6" width="20" height="21" rx="3" />
              <rect x="8.500" y="32.500" width="20" height="20" rx="3" />
              <rect x="33" y="32.500" width="20" height="20" rx="3" />
              <path d="M41.500 6.500Q43 5 44.500 6.500L53 16Q54 17 53 18.500L44.500 27.500Q43 29 41.500 27.500L33 18.500Q32 17 33 16Z" />
            </svg>
            功能
          </Action>
          <Action>
            <svg width="62" height="58" viewBox="0 0 62 58" fill="none" stroke="#666" strokeWidth="2.800">
              <circle cx="31" cy="30" r="25" />
              {[20.500, 31, 41.500].map((x) => (
                <circle key={x} cx={x} cy="30" r="2.600" fill="#666" stroke="none" />
              ))}
            </svg>
            设自选
          </Action>
        </BottomBar>

        <SystemNav>
          <svg width="480" height="38" viewBox="299 2256 480 38" fill="none" stroke="#888" strokeWidth="2.800">
            <path d="M302 2263H332M302 2275H332M302 2287H332" />
            <rect x="525.500" y="2260.500" width="29" height="29" rx="6" />
            <path d="M775 2260L760 2275.500L775 2291" />
          </svg>
        </SystemNav>
      </Screen>
    </>
  );
}
